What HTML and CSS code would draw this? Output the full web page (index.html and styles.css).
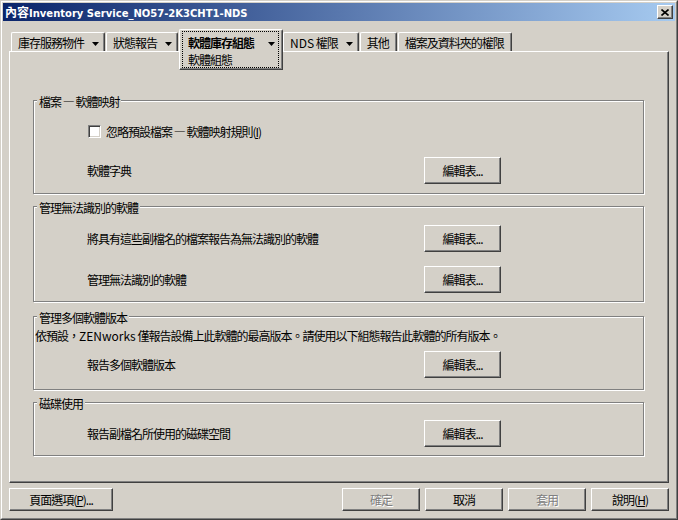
FILE: index.html
```html
<!DOCTYPE html>
<html lang="zh-Hant">
<head>
<meta charset="utf-8">
<title>內容Inventory Service_NO57-2K3CHT1-NDS</title>
<link rel="stylesheet" href="styles.css">
</head>
<body>
<div class="window">
  <div class="frame">
    <div class="titlebar">
      <span class="title"><span class="cjk">內容</span>Inventory Service_NO57-2K3CHT1-NDS</span>
      <span class="close">
        <svg width="8" height="7" viewBox="0 0 8 7"><path d="M0.5 0.5 L7.5 6.5 M7.5 0.5 L0.5 6.5" stroke="#000" stroke-width="1.6" fill="none"/></svg>
      </span>
    </div>
    <div class="client">
      <div class="tabs">
        <div class="tab"><span>庫存服務物件</span><svg class="arrow" width="7" height="4" viewBox="0 0 7 4"><polygon points="0,0 7,0 3.5,4" fill="#000"/></svg></div>
        <div class="tab"><span>狀態報告</span><svg class="arrow" width="7" height="4" viewBox="0 0 7 4"><polygon points="0,0 7,0 3.5,4" fill="#000"/></svg></div>
        <div class="tab selected">
          <div class="focus">
            <div class="sel-main"><span>軟體庫存組態</span><svg class="arrow" width="7" height="4" viewBox="0 0 7 4"><polygon points="0,0 7,0 3.5,4" fill="#000"/></svg></div>
            <div class="sel-sub">軟體組態</div>
          </div>
        </div>
        <div class="tab"><span><span class="lat">NDS</span> 權限</span><svg class="arrow" width="7" height="4" viewBox="0 0 7 4"><polygon points="0,0 7,0 3.5,4" fill="#000"/></svg></div>
        <div class="tab plain"><span>其他</span></div>
        <div class="tab plain"><span>檔案及資料夾的權限</span></div>
      </div>
      <div class="panel">
        <div class="group g1">
          <div class="legend">檔案 — 軟體映射</div>
          <div class="check-row"><span class="checkbox"></span><span>忽略預設檔案 — 軟體映射規則(<u>I</u>)</span></div>
          <div class="row r-g1"><span>軟體字典</span><button class="btn edit">編輯表...</button></div>
        </div>
        <div class="group g2">
          <div class="legend">管理無法識別的軟體</div>
          <div class="row r-g2a"><span>將具有這些副檔名的檔案報告為無法識別的軟體</span><button class="btn edit">編輯表...</button></div>
          <div class="row r-g2b"><span>管理無法識別的軟體</span><button class="btn edit">編輯表...</button></div>
        </div>
        <div class="group g3">
          <div class="legend">管理多個軟體版本</div>
          <div class="desc">依預設，<span class="lat">ZENworks</span> 僅報告設備上此軟體的最高版本。請使用以下組態報告此軟體的所有版本。</div>
          <div class="row r-g3"><span>報告多個軟體版本</span><button class="btn edit">編輯表...</button></div>
        </div>
        <div class="group g4">
          <div class="legend">磁碟使用</div>
          <div class="row r-g4"><span>報告副檔名所使用的磁碟空間</span><button class="btn edit">編輯表...</button></div>
        </div>
      </div>
      <div class="footer">
        <button class="btn page">頁面選項(<u>P</u>)...</button>
        <span class="spacer"></span>
        <button class="btn dlg disabled">確定</button>
        <button class="btn dlg">取消</button>
        <button class="btn dlg disabled">套用</button>
        <button class="btn dlg">說明(<u>H</u>)</button>
      </div>
    </div>
  </div>
</div>
</body>
</html>
```
FILE: styles.css
```css
* { box-sizing: border-box; }
html, body { margin: 0; padding: 0; }
body {
  width: 678px;
  height: 520px;
  overflow: hidden;
  background: #d4d0c8;
  color: #000;
  font-family: "Noto Sans CJK TC", "Noto Sans", sans-serif;
  font-size: 12px;
  letter-spacing: -1px;
  line-height: 13px;
}
.lat { letter-spacing: 0; }
u { text-decoration: underline; text-underline-offset: 1px; }

.window {
  width: 678px;
  height: 520px;
  border: 1px solid;
  border-color: #d4d0c8 #404040 #404040 #d4d0c8;
}
.frame {
  height: 100%;
  border: 1px solid;
  border-color: #fff #808080 #808080 #fff;
  padding: 1px;
  display: flex;
  flex-direction: column;
}

/* title bar */
.titlebar {
  height: 18px;
  flex: none;
  background: linear-gradient(to right, #0a246a 0%, #a6caf0 100%);
  display: flex;
  align-items: center;
  justify-content: space-between;
  padding: 0 2px 0 2px;
}
.title {
  color: #fff;
  font-family: "DejaVu Sans", "Noto Sans CJK TC", sans-serif;
  font-weight: bold;
  font-size: 10px;
  letter-spacing: 0;
  white-space: nowrap;
}
.title .cjk {
  font-family: "Noto Sans CJK TC", sans-serif;
  font-size: 12px;
}
.close {
  width: 16px;
  height: 14px;
  background: #d4d0c8;
  border: 1px solid;
  border-color: #fff #404040 #404040 #fff;
  box-shadow: inset -1px -1px #808080;
  display: flex;
  align-items: center;
  justify-content: center;
}

/* client */
.client {
  flex: 1;
  display: flex;
  flex-direction: column;
  padding: 8px 6px 6px 6px;
}

/* tabs */
.tabs {
  height: 22px;
  flex: none;
  display: flex;
  align-items: flex-start;
  padding-left: 2px;
}
.tab {
  margin-top: 3px;
  height: 19px;
  margin-right: 1px;
  padding: 3px 5px 0 6px;
  display: flex;
  align-items: flex-start;
  gap: 8px;
  white-space: nowrap;
  border-top: 1px solid #fff;
  border-left: 1px solid #fff;
  border-right: 1px solid #404040;
  border-top-left-radius: 2px;
  border-top-right-radius: 2px;
  box-shadow: inset -1px 0 #808080;
}
.tab.plain { padding-right: 7px; }
.arrow { margin-top: 6px; flex: none; }

.tab.selected {
  position: relative;
  z-index: 1;
  margin-top: 0;
  margin-right: 0;
  height: 41px;
  padding: 1px 3px 1px 2px;
  background: #d4d0c8;
  border-bottom: 1px solid #404040;
  box-shadow: inset -1px -1px #808080;
}
.focus {
  width: 97px;
  height: 37px;
  border: 1px dotted #000;
  padding: 4px 3px 0 5px;
}
.sel-main {
  display: flex;
  justify-content: space-between;
  align-items: flex-start;
  font-weight: bold;
  height: 13px;
}
.sel-sub { margin-top: 4px; }

/* panel */
.panel {
  flex: 1;
  border-top: 1px solid #fff;
  border-left: 1px solid #fff;
  border-right: 1px solid #404040;
  border-bottom: 1px solid #404040;
  box-shadow: inset -1px -1px #808080;
  padding: 48px 24px 0 23px;
}
.group {
  border: 1px solid #808080;
  box-shadow: inset 1px 1px #fff, 1px 1px #fff;
}
.g1 { height: 94px; }
.g2 { height: 96px; margin-top: 12px; }
.g3 { height: 74px; margin-top: 14px; }
.g4 { height: 54px; margin-top: 12px; }

.legend {
  width: fit-content;
  height: 14px;
  line-height: 14px;
  margin: -6px 0 -8px 3px;
  padding: 0 2px;
  background: #d4d0c8;
  position: relative;
}

.check-row {
  margin-top: 23px;
  height: 14px;
  padding-left: 54px;
  display: flex;
  align-items: center;
}
.checkbox {
  width: 13px;
  height: 13px;
  margin-right: 5px;
  background: #fff;
  border: 1px solid;
  border-color: #808080 #fff #fff #808080;
  box-shadow: inset 1px 1px #404040, inset -1px -1px #d4d0c8;
}

.row {
  display: flex;
  align-items: center;
  justify-content: space-between;
  padding: 0 142px 0 53px;
  height: 27px;
}
.r-g1 { margin-top: 19px; }
.r-g2a { margin-top: 18px; }
.r-g2b { margin-top: 14px; }
.r-g3 { margin-top: 8px; }
.r-g4 { margin-top: 17px; }

.desc {
  margin-top: 12px;
  height: 14px;
  line-height: 14px;
  padding-left: 1px;
  white-space: nowrap;
}

/* buttons */
.btn {
  font: inherit;
  letter-spacing: -1px;
  color: #000;
  background: #d4d0c8;
  border: 1px solid;
  border-color: #fff #404040 #404040 #fff;
  box-shadow: inset -1px -1px #808080;
  padding: 0;
  margin: 0;
  display: flex;
  align-items: center;
  justify-content: center;
  white-space: nowrap;
}
.btn.edit { width: 77px; height: 27px; }

.footer {
  flex: none;
  margin-top: 5px;
  height: 23px;
  display: flex;
  gap: 5px;
}
.spacer { flex: 1; }
.btn.page { width: 104px; height: 23px; }
.btn.dlg { width: 78px; height: 23px; }
.btn.disabled {
  color: #808080;
  text-shadow: 1px 1px #fff;
}
```
